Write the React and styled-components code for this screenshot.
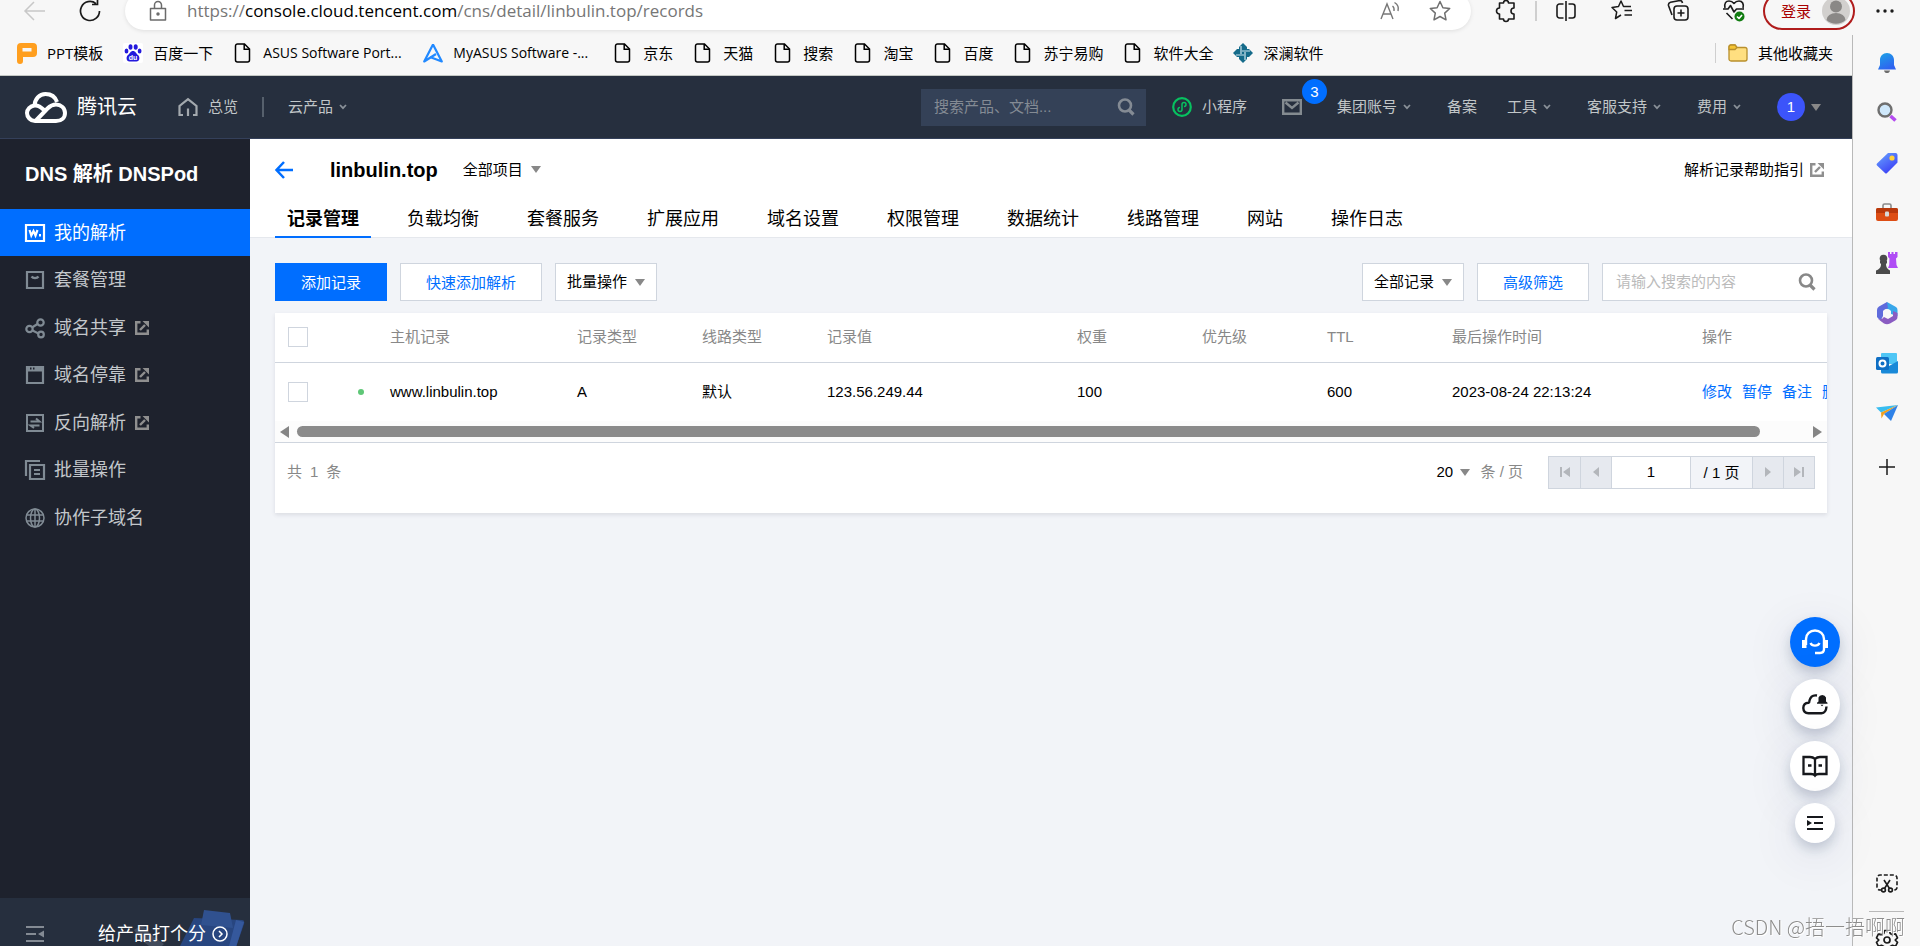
import React from "react";
import styled, { createGlobalStyle, css } from "styled-components";

const sans = '"Liberation Sans", "Noto Sans CJK SC", sans-serif';
const chromeFont = '"Open Sans", "Noto Sans CJK SC", sans-serif';

const GlobalStyle = createGlobalStyle`
  *, *::before, *::after { box-sizing: border-box; }
  html, body { margin: 0; padding: 0; overflow: hidden; }
  body { font: 15px/20px ${sans}; color: #000; background: #f7f7f7; }
  button, input, select { font: inherit; color: inherit; margin: 0; padding: 0; border: 0; background: none; border-radius: 0; outline: none; }
  button, select { cursor: pointer; }
  select { appearance: none; }
  a { color: inherit; text-decoration: none; }
  ul { list-style: none; margin: 0; padding: 0; }
  h1, h2 { margin: 0; font-size: 20px; line-height: 24px; font-weight: 700; }
  svg { display: block; flex: none; overflow: visible; }
`;

/* ---------- browser frame ---------- */

const Shell = styled.div`
  display: flex;
  flex-direction: column;
  height: 100vh;
  overflow: hidden;
`;

const TopBar = styled.header`
  display: flex;
  align-items: center;
  height: 22px;
  margin-bottom: 13px;
  padding: 0 24px;
  flex: none;
  font-family: ${chromeFont};
`;

const IconButton = styled.button`
  display: flex;
  align-items: center;
  justify-content: center;
  width: 22px;
  height: 22px;
  flex: none;
`;

const NavButtons = styled.div`
  display: flex;
  gap: 33px;
  width: 101px;
  flex: none;
`;

const AddressBar = styled.div`
  display: flex;
  align-items: center;
  flex: 1;
  height: 38px;
  padding: 0 20px 0 22px;
  border-radius: 19px;
  background: #fff;
  box-shadow: 0 1px 4px rgba(0, 0, 0, 0.1);
  gap: 18px;
`;

const Url = styled.div`
  flex: 1;
  font-size: 17px;
  line-height: 24px;
  color: #767676;
  white-space: nowrap;
  b { font-weight: 400; color: #000; }
`;

const AddressTools = styled.div`
  display: flex;
  gap: 28px;
`;

const BrowserTools = styled.div`
  display: flex;
  align-items: center;
  gap: 34px;
  margin-left: 24px;
`;

const ToolPair = styled.div`
  display: flex;
  align-items: center;
  gap: 18px;
`;

const Divider = styled.span`
  width: ${(p) => p.$w || 1}px;
  height: 20px;
  background: ${(p) => p.$color || "#cfcfcf"};
  flex: none;
`;

const LoginButton = styled.button`
  display: flex;
  align-items: center;
  justify-content: space-between;
  width: 92px;
  height: 38px;
  margin: 0 19px 0 18px;
  padding: 0 3px 0 16px;
  border: 2px solid #b01c1c;
  border-radius: 19px;
  color: #a80000;
  font-size: 15px;
`;

const Below = styled.div`
  display: flex;
  flex: 1;
  min-height: 0;
`;

const Page = styled.div`
  display: flex;
  flex-direction: column;
  flex: 1;
  min-width: 0;
  position: relative;
`;

const Bookmarks = styled.nav`
  display: flex;
  align-items: center;
  height: 41px;
  padding: 0 19px 4px 17px;
  border-bottom: 1px solid #c4c8c4;
  flex: none;
  gap: 20px;
  font-family: ${chromeFont};
`;

const Bookmark = styled.a`
  display: flex;
  align-items: center;
  gap: 10px;
  white-space: nowrap;
  min-width: ${(p) => (p.$latin ? 170 : 0)}px;
  font-size: ${(p) => (p.$latin ? 14 : 15)}px;
`;

const OtherBookmarks = styled.div`
  display: flex;
  align-items: center;
  gap: 12px;
  margin-left: auto;
`;

const EdgeSidebar = styled.aside`
  display: flex;
  flex-direction: column;
  align-items: center;
  width: 68px;
  padding-top: 3px;
  border-left: 1px solid #b9b9b9;
  flex: none;
`;

const EdgeItem = styled.button`
  display: flex;
  align-items: center;
  justify-content: center;
  width: 50px;
  height: 50px;
  flex: none;
`;

const EdgeAdd = styled(EdgeItem)`
  height: 58px;
`;

const EdgeBottom = styled.div`
  display: flex;
  flex-direction: column;
  align-items: center;
  margin-top: auto;
  margin-bottom: -19px;
  hr { width: 35px; height: 1px; border: 0; margin: 3px 0; background: #b9b9b9; }
`;

/* ---------- console header ---------- */

const Header = styled.header`
  display: flex;
  align-items: center;
  height: 63px;
  padding: 0 31px 0 24px;
  background: #262f3e;
  border-bottom: 1px solid #34405a;
  color: #c1c6c8;
  flex: none;
  white-space: nowrap;
`;

const Logo = styled.a`
  display: flex;
  align-items: center;
  gap: 10px;
  margin-right: 41px;
  color: #fff;
  font-size: 20px;
  line-height: 24px;
`;

const HeaderLink = styled.a`
  display: flex;
  align-items: center;
  gap: ${(p) => p.$gap || 6}px;
  padding-right: ${(p) => p.$end || 0}px;
`;

const LeftNav = styled.nav`
  display: flex;
  align-items: center;
  gap: 24px;
`;

const HeaderSearch = styled.label`
  display: flex;
  align-items: center;
  justify-content: space-between;
  width: 225px;
  height: 37px;
  margin-left: auto;
  margin-right: 26px;
  padding: 0 11px 0 13px;
  background: #344157;
  color: #848b94;
  input { width: 160px; color: #fff; }
  input::placeholder { color: #848b94; opacity: 1; }
`;

const RightNav = styled.nav`
  display: flex;
  align-items: center;
  gap: 30px;
`;

const MailLink = styled.a`
  position: relative;
  padding-right: 5px;
`;

const Badge = styled.span`
  position: absolute;
  left: 20px;
  bottom: 11px;
  width: 25px;
  height: 25px;
  border-radius: 50%;
  background: #006eff;
  color: #fff;
  line-height: 25px;
  text-align: center;
`;

const Account = styled.button`
  display: flex;
  align-items: center;
  gap: 6px;
`;

const Avatar = styled.span`
  width: 28px;
  height: 28px;
  border-radius: 50%;
  background: #3c54fa;
  color: #fff;
  line-height: 28px;
  text-align: center;
`;

const Caret = styled.span`
  width: 0;
  height: 0;
  border: 5px solid transparent;
  border-top: 7px solid #888;
  border-bottom: 0;
  flex: none;
`;

/* ---------- console body ---------- */

const Console = styled.div`
  display: flex;
  flex: 1;
  min-height: 0;
`;

const SideNav = styled.aside`
  display: flex;
  flex-direction: column;
  width: 250px;
  background: #1e222d;
  color: #c3c7cb;
  flex: none;
`;

const SideTitle = styled.h2`
  height: 70px;
  padding: 0 25px;
  color: #fff;
  line-height: 70px;
`;

const SideMenu = styled.ul`
  display: flex;
  flex-direction: column;
  justify-content: space-between;
  min-height: 332px;
`;

const SideLink = styled.a`
  display: flex;
  align-items: center;
  height: 47px;
  padding: 0 25px;
  gap: 9px;
  font-size: 18px;
  line-height: 24px;
  color: ${(p) => (p.$active ? "#fff" : "inherit")};
  background: ${(p) => (p.$active ? "#006eff" : "none")};
  > svg:first-child { color: ${(p) => (p.$active ? "#fff" : "#808b94")}; }
`;

const SideFooter = styled.div`
  display: flex;
  align-items: flex-start;
  justify-content: space-between;
  height: 48px;
  margin-top: auto;
  padding: 0 0 0 26px;
  background: #262f3e;
  overflow: hidden;
`;

const CollapseButton = styled.button`
  padding-top: 28px;
  color: #848b94;
`;

const RateLink = styled.a`
  display: flex;
  align-items: center;
  position: relative;
  padding: 24px 22px 0 0;
  color: #fff;
  font-size: 18px;
  line-height: 24px;
`;

const RateArt = styled.svg`
  position: absolute;
  right: 0;
  top: 8px;
`;

const RateText = styled.span`
  position: relative;
  display: flex;
  align-items: center;
  gap: 6px;
`;

const Main = styled.main`
  display: flex;
  flex-direction: column;
  flex: 1;
  min-width: 0;
  background: #f2f4f8;
`;

const PageHead = styled.div`
  background: #fff;
  border-bottom: 1px solid #e5e8ed;
  padding: 0 25px;
`;

const TitleRow = styled.div`
  display: flex;
  align-items: center;
  height: 61px;
  h1 { margin: 0 25px 0 33px; }
`;

const HelpLink = styled.a`
  display: flex;
  align-items: center;
  gap: 6px;
  margin-left: auto;
  padding-right: 3px;
`;

const SelectBox = styled.label`
  display: flex;
  align-items: center;
  justify-content: center;
  gap: 7px;
  background: ${(p) => (p.$boxed ? "#fff" : "none")};
  ${(p) => p.$boxed && css`
    width: 102px;
    height: 38px;
    border: 1px solid #cfd5de;
  `}
`;

const Tabs = styled.div`
  display: flex;
  gap: 24px;
  margin-bottom: -1px;
`;

const Tab = styled.button`
  height: 38px;
  padding: 3px 12px 0;
  border-bottom: 2px solid ${(p) => (p.$active ? "#006eff" : "transparent")};
  font-size: 18px;
  line-height: 33px;
  font-weight: ${(p) => (p.$active ? 700 : 400)};
`;

const Content = styled.div`
  padding: 25px;
`;

const Toolbar = styled.div`
  display: flex;
  gap: 13px;
  margin-bottom: 12px;
`;

const Button = styled.button`
  display: flex;
  align-items: center;
  justify-content: center;
  gap: 8px;
  width: ${(p) => p.$w}px;
  height: 38px;
  padding-top: ${(p) => (p.$dark ? 0 : 2)}px;
  border: 1px solid ${(p) => (p.$primary ? "#006eff" : "#cfd5de")};
  background: ${(p) => (p.$primary ? "#006eff" : "#fff")};
  color: ${(p) => (p.$primary ? "#fff" : p.$dark ? "#000" : "#006eff")};
`;

const Spacer = styled.div`
  flex: 1;
`;

const SearchField = styled.label`
  display: flex;
  align-items: center;
  width: 225px;
  height: 38px;
  padding: 0 10px 0 13px;
  border: 1px solid #cfd5de;
  background: #fff;
  color: #888;
  input { flex: 1; min-width: 0; }
  input::placeholder { color: #bbb; opacity: 1; }
`;

const Card = styled.section`
  background: #fff;
  box-shadow: 0 2px 4px rgba(54, 58, 80, 0.12);
`;

const TableScroll = styled.div`
  overflow: hidden;
`;

const Table = styled.table`
  width: 100%;
  min-width: 1662px;
  table-layout: fixed;
  border-collapse: collapse;
  th, td { padding: 0 13px; text-align: left; white-space: nowrap; font-weight: 400; }
  th { height: 49px; color: #888; border-bottom: 1px solid #cfd5de; }
  td { height: 59px; color: #000; }
`;

const Check = styled.input`
  appearance: none;
  display: block;
  width: 20px;
  height: 20px;
  border: 1px solid #cfd5de !important;
  background: #fff;
`;

const StatusDot = styled.span`
  display: block;
  width: 6px;
  height: 6px;
  margin-left: 12px;
  border-radius: 50%;
  background: #5fc777;
`;

const Actions = styled.div`
  display: flex;
  gap: 10px;
  color: #006eff;
`;

const ScrollTrack = styled.div`
  display: flex;
  align-items: center;
  justify-content: space-between;
  height: 22px;
  padding: 0 5px;
  background: #fcfcfc;
  border-bottom: 1px solid #cfd5de;
`;

const ScrollLane = styled.div`
  flex: 1;
  padding: 0 7px;
  div { width: 97%; height: 11px; border-radius: 6px; background: #8b8b8b; }
`;

const TableFoot = styled.div`
  display: flex;
  align-items: center;
  height: 70px;
  padding: 0 12px 12px 12px;
  color: #888;
`;

const Total = styled.span`
  display: flex;
  gap: 8px;
  margin-right: auto;
`;

const PerPage = styled.div`
  display: flex;
  align-items: center;
  gap: 10px;
  margin-right: 25px;
  select { color: #000; }
`;

const Pager = styled.div`
  display: flex;
  height: 33px;
  border: 1px solid #cfd5de;
  color: #000;
  > * + * { border-left: 1px solid #cfd5de; }
  input { width: 79px; text-align: center; }
  span { width: 62px; line-height: 31px; text-align: center; background: #f2f4f8; }
`;

const PagerButton = styled.button`
  display: flex;
  align-items: center;
  justify-content: center;
  width: 31px;
  background: #e6e9ef;
  color: #b3b6bb;
`;

/* ---------- floating helpers ---------- */

const FloatStack = styled.div`
  position: absolute;
  right: 12px;
  bottom: 103px;
  display: flex;
  flex-direction: column;
  align-items: center;
  gap: 12px;
`;

const FloatButton = styled.button`
  display: flex;
  align-items: center;
  justify-content: center;
  width: ${(p) => (p.$small ? 40 : 50)}px;
  height: ${(p) => (p.$small ? 40 : 50)}px;
  border-radius: 50%;
  background: ${(p) => (p.$primary ? "#006eff" : "#fff")};
  color: ${(p) => (p.$primary ? "#fff" : "#16181c")};
  box-shadow: 0 6px 12px rgba(25, 45, 90, 0.2), 0 12px 50px rgba(25, 45, 90, 0.12);
`;

const Watermark = styled.div`
  position: fixed;
  right: 15px;
  bottom: 6px;
  font: 20px/26px "Noto Sans CJK SC", sans-serif;
  font-weight: 300;
  color: #8d8d8d;
  text-shadow: 0 0 1px #fff, 1px 1px 0 #fff;
  white-space: nowrap;
`;

/* ---------- icons ---------- */

const Svg = ({ s = 20, w, h, box, sw = 1.5, children, ...rest }) => (
  <svg width={w || s} height={h || s} viewBox={box || `0 0 ${w || s} ${h || s}`} fill="none" stroke="currentColor" strokeWidth={sw} aria-hidden="true" {...rest}>
    {children}
  </svg>
);

const Chevron = () => (
  <Svg w={8} h={6} sw={1.7} color="#8a9199"><path d="M1 1l3 3.2L7 1" /></Svg>
);

const Magnifier = () => (
  <Svg s={18} sw={2.6}><circle cx="8" cy="7.5" r="6" /><path d="M12 12l4.5 4.5" strokeWidth="3.2" /></Svg>
);

const External = () => (
  <Svg s={14} sw={2.4} color="#8f8f8f"><path d="M5.500 1.200H1.200v11.600h11.600V8.500" /><path d="M5 9l5-5" /><path d="M7.500 0H14v6.500z" fill="currentColor" stroke="none" /></Svg>
);

const DocIcon = () => (
  <Svg s={20} sw={1.5}><path d="M4.500 1h7l5 5v11a2 2 0 0 1-2 2h-10a2 2 0 0 1-2-2V3a2 2 0 0 1 2-2z" /><path d="M11.200 1v5.300h5.300" /></Svg>
);

const PptIcon = () => (
  <Svg s={20} stroke="none"><path d="M4 0h12a4 4 0 0 1 4 4v6a4 4 0 0 1-4 4H6v4a2.500 2.500 0 0 1-6 0V4a4 4 0 0 1 4-4z" fill="#ff9f1f" /><path d="M5.500 5h9v3.500h-9z" fill="#f7f7f7" /></Svg>
);

const BaiduIcon = () => (
  <Svg s={20} stroke="none">
    <rect width="20" height="20" rx="2" fill="#fff" />
    <g fill="#2319dc"><ellipse cx="7.500" cy="4" rx="2" ry="2.800" /><ellipse cx="12.700" cy="4" rx="2" ry="2.800" /><ellipse cx="3.500" cy="8" rx="1.900" ry="2.500" /><ellipse cx="16.600" cy="8" rx="1.900" ry="2.500" /><path d="M10 8c2.500 0 3 2.500 5 4 2.200 1.800 1.800 6.500-1.500 6.500H6.500C3.200 18.500 2.800 13.800 5 12c2-1.500 2.500-4 5-4z" /></g>
    <text x="10" y="17" fontSize="7" fontWeight="700" textAnchor="middle" fill="#fff" fontFamily="Liberation Sans">du</text>
  </Svg>
);

const AsusIcon = () => (
  <Svg s={20} sw={2.200} color="#2189ff" strokeLinejoin="round"><path d="M10 1.500L1.200 18.500 13 11M10 1.500l8.800 17L7 14" /></Svg>
);

const KnotIcon = () => (
  <Svg s={20} stroke="none"><path d="M10 0l4 4v2h2l4 4-4 4h-2v2l-4 4-4-4v-2H4l-4-4 4-4h2V4z" fill="#156b8a" /><path d="M8 3v8M12 9v8M3 12h8M9 8h8" stroke="#cfe6ee" strokeWidth="1.200" /></Svg>
);

const FolderIcon = () => (
  <Svg s={20} sw={1.300}><path d="M1 4a2 2 0 0 1 2-2h4l2 2.500h8a2 2 0 0 1 2 2V16a2 2 0 0 1-2 2H3a2 2 0 0 1-2-2z" fill="#ffdf80" stroke="#b9902c" /><path d="M1 6.500h6l2-2L7 2H3a2 2 0 0 0-2 2z" fill="#f5c431" stroke="#b9902c" /></Svg>
);

const CloudLogo = () => (
  <Svg w={43} h={31} sw={4} color="#fff" strokeLinejoin="round">
    <path d="M10.500 14.500C10.500 7 15.500 2 21.500 2c6 0 10 3.500 11.500 8" />
    <path d="M20 18c-3-3-6-5-9.500-4.500C6 14 3 17.500 3 21c0 4 3.500 8 8 8h21c5.500 0 9-3.500 9-8 0-5-4-8.500-9-8.500-4 0-6 1.500-8.500 4L12 28.500" />
  </Svg>
);

const HomeIcon = () => (
  <Svg w={20} h={18} sw={2.200} color="#a3a9ae"><path d="M5 17H1.500V8L10 1.200 18.500 8v9H15M10 10.500V18" /></Svg>
);

const MiniIcon = () => (
  <Svg s={20} sw={2.200} color="#07c160"><circle cx="10" cy="10" r="8.800" /><path d="M8 10.500a2 2 0 1 0 2 2v-5a2 2 0 1 1 2 2" strokeWidth="1.500" /></Svg>
);

const MailIcon = () => (
  <Svg w={20} h={16} sw={2.400} color="#848b90"><path d="M1.200 1.200h17.600v13.600H1.200zM3.500 3.500L10 9l6.500-5.500" /></Svg>
);

const menuIcons = {
  w: <Svg s={20} sw={2.200}><path d="M1 2h18v16H1z" /><path d="M4.500 7l1.800 5.500L8.500 8l2 4.500L12.500 7" /><path d="M14 11h2v2.500h-2z" fill="currentColor" stroke="none" /></Svg>,
  bag: <Svg s={20} sw={2.200}><path d="M2 2h16v16H2zM6.500 6.500a4 3 0 0 0 7 0" /></Svg>,
  share: <Svg s={20} sw={2.200}><circle cx="4.500" cy="11" r="3.200" /><circle cx="15.500" cy="4.500" r="3.200" /><circle cx="16" cy="16.500" r="2.800" /><path d="M7 9.500l5.500-3.500M7.500 12.500l6 3" /></Svg>,
  win: <Svg s={20} sw={2.200}><path d="M2 2h16v16H2z" /><path d="M2 2h16v4.500H2z" fill="currentColor" stroke="none" /><path d="M5 3.500h1.500M8 3.500h1.500" stroke="#1e222d" /></Svg>,
  swap: <Svg s={20} sw={2}><path d="M2 2h16v16H2zM5.500 8.500h9L11 5.500M14.500 12.500h-9l3.500 2.500" /></Svg>,
  copy: <Svg s={20} sw={2.200}><path d="M1 16V1h14M5 5h14v14H5zM9 10h6M9 14h6" /></Svg>,
  globe: <Svg s={20} sw={1.500}><circle cx="10" cy="10" r="9" /><ellipse cx="10" cy="10" rx="4.500" ry="9" /><path d="M10 1v18M1.500 7h17M1.500 13h17" /></Svg>,
};

const edgeIcons = [
  ["通知", <Svg s={20} stroke="none"><defs><linearGradient id="bell" x1="0" y1="0" x2="0.500" y2="1"><stop offset="0" stopColor="#1ba5e6" /><stop offset="1" stopColor="#2f63f0" /></linearGradient></defs><path d="M10 0c4 0 7 3 7 7v5l2 4.500H1L3 12V7c0-4 3-7 7-7z" fill="url(#bell)" /><path d="M7 17.500h6c-.5 2-1.500 2.500-3 2.500s-2.500-.5-3-2.500z" fill="#6d6d6d" /></Svg>],
  ["搜索", <Svg s={20}><circle cx="8" cy="7" r="6.500" fill="#cfe8fb" stroke="#6f6f6f" strokeWidth="2.400" /><path d="M13.500 13l5 4.500" stroke="#b44bf0" strokeWidth="3.600" /></Svg>],
  ["购物", <Svg s={22} stroke="none"><defs><linearGradient id="tag" x1="0" y1="0" x2="0.700" y2="1"><stop offset="0" stopColor="#6aa8ff" /><stop offset="1" stopColor="#3a3cf5" /></linearGradient></defs><path d="M12 1h7.500a2 2 0 0 1 2 2v7.500L11 21q-1 1-2 0L1 13.500q-1-1 0-2z" fill="url(#tag)" /><circle cx="16" cy="6" r="2.600" fill="#ffd23c" /></Svg>],
  ["工具", <Svg s={22} stroke="none"><path d="M7 6V3.500A1.500 1.500 0 0 1 8.500 2h5A1.500 1.500 0 0 1 15 3.500V6" fill="none" stroke="#8a8a8a" strokeWidth="1.600" /><rect x="0" y="6" width="22" height="13" rx="2" fill="#dd4d14" /><path d="M0 8a2 2 0 0 1 2-2h18a2 2 0 0 1 2 2v3H0z" fill="#b8380b" /><rect x="9" y="9.500" width="4" height="5" rx="1" fill="#d9d9d9" /></Svg>],
  ["游戏", <Svg s={22} stroke="none"><path d="M12 0h2v2h1.500V0h2v2H19V0h2.500v5L20 6.500l.5 6.500 1.500 3H12l1.200-3 .3-6.500L12 5z" fill="#b04cf5" /><g fill="#4b4b4b"><circle cx="7.500" cy="6.500" r="3.800" /><path d="M4 9h7v2l-1 1c0 3 1 5 4 6.500V22H0v-3.500C4 17 5 15 5 12l-1-1z" /></g></Svg>],
  ["Microsoft 365", <Svg s={22} stroke="none"><path d="M11 0L20 5q1.500 1 1.500 3v6L15 12V9l-6-3z" fill="#39a7ea" /><path d="M11 0L3 4.500Q1 5.500 1 8v7q1 2 4 3l2-4V9l5-3z" fill="#5f6bdc" /><path d="M21.500 11v4q0 2-1.500 3l-6 3.500q-3 1.500-6 0L2 17q4 1 6-2l4 2 5-3V9z" fill="#8a5cc2" /><circle cx="11" cy="11" r="4" fill="#f7f7f7" /></Svg>],
  ["Outlook", <Svg s={22} stroke="none"><path d="M6 1h14a1 1 0 0 1 1 1v10H5V2a1 1 0 0 1 1-1z" fill="#4fc6f5" /><path d="M5 10l8 4 9-5v11a1.500 1.500 0 0 1-1.500 1.500h-14A1.500 1.500 0 0 1 5 20z" fill="#1989d8" /><rect x="0" y="5" width="13" height="13" rx="1.500" fill="#0f6fc4" /><circle cx="6.500" cy="11.500" r="3" fill="none" stroke="#fff" strokeWidth="2" /></Svg>],
  ["Drop", <Svg s={22} stroke="none"><path d="M0 5.500L22 3 5 10.500z" fill="#38bdf0" /><path d="M5 10.500L22 3 8 12l-2.500 4.500z" fill="#f0a01e" /><path d="M8 12L22 3l-7 16z" fill="#2e82e8" /></Svg>],
];

const PersonIcon = () => (
  <Svg s={28} stroke="none"><circle cx="14" cy="14" r="14" fill="#d2d0ce" /><circle cx="14" cy="9.500" r="6" fill="#8a8886" /><path d="M4.500 23a9.500 7 0 0 1 19 0 14 14 0 0 1-19 0z" fill="#8a8886" /></Svg>
);

/* ---------- data ---------- */

const bookmarks = [
  { label: "PPT模板", icon: <PptIcon /> },
  { label: "百度一下", icon: <BaiduIcon /> },
  { label: "ASUS Software Port...", latin: true },
  { label: "MyASUS Software -...", latin: true, icon: <AsusIcon /> },
  { label: "京东" },
  { label: "天猫" },
  { label: "搜索" },
  { label: "淘宝" },
  { label: "百度" },
  { label: "苏宁易购" },
  { label: "软件大全" },
  { label: "深澜软件", icon: <KnotIcon /> },
];

const menu = [
  { label: "我的解析", icon: "w", active: true },
  { label: "套餐管理", icon: "bag" },
  { label: "域名共享", icon: "share", external: true },
  { label: "域名停靠", icon: "win", external: true },
  { label: "反向解析", icon: "swap", external: true },
  { label: "批量操作", icon: "copy" },
  { label: "协作子域名", icon: "globe" },
];

const tabs = ["记录管理", "负载均衡", "套餐服务", "扩展应用", "域名设置", "权限管理", "数据统计", "线路管理", "网站", "操作日志"];

const columns = [
  ["主机记录", 187],
  ["记录类型", 125],
  ["线路类型", 125],
  ["记录值", 250],
  ["权重", 125],
  ["优先级", 125],
  ["TTL", 125],
  ["最后操作时间", 250],
  ["操作", null],
];

const records = [
  ["www.linbulin.top", "A", "默认", "123.56.249.44", "100", "", "600", "2023-08-24 22:13:24"],
];

/* ---------- sections ---------- */

const BrowserTop = () => (
  <TopBar>
    <NavButtons>
      <IconButton aria-label="后退"><Svg s={22} color="#c8c8c8"><path d="M1 11h20M10 2l-9 9 9 9" /></Svg></IconButton>
      <IconButton aria-label="刷新"><Svg s={22} color="#1b1b1b" sw={1.700}><path d="M20.500 11A9.500 9.500 0 1 1 17 3.600M13 4.500h5.500V-1" /></Svg></IconButton>
    </NavButtons>
    <AddressBar>
      <Svg w={22} h={20} color="#6b6b6b"><path d="M3.500 7.500h15v11.500h-15zM7.500 7.500V4a3.500 3.500 0 0 1 7 0v3.500" strokeLinejoin="round" /><circle cx="11" cy="13" r="1" fill="currentColor" /></Svg>
      <Url>https://<b>console.cloud.tencent.com</b>/cns/detail/linbulin.top/records</Url>
      <AddressTools>
        <IconButton aria-label="朗读"><Svg s={20} color="#777" sw={1.400}><path d="M1 18L7 3l6 15M3 13h8M12.500 5q2 1.500 1.500 5M14.500 1.500q5 3 3.500 8.500" /></Svg></IconButton>
        <IconButton aria-label="收藏"><Svg s={22} color="#6f6f6f" strokeLinejoin="round"><path d="M11 1.500l2.900 6.200 6.800.8-5 4.600 1.300 6.700-6-3.300-6 3.300 1.300-6.700-5-4.600 6.800-.8z" /></Svg></IconButton>
      </AddressTools>
    </AddressBar>
    <BrowserTools>
      <ToolPair>
        <IconButton aria-label="扩展"><Svg s={22} color="#1b1b1b" sw={1.600} strokeLinejoin="round"><path d="M4.500 3h4a2.500 2.500 0 0 1 5 0H19v5a3 3 0 0 0 0 6v5h-5.500a2.500 2.500 0 0 1-5 0h-4v-5a3 3 0 0 1 0-6z" /></Svg></IconButton>
        <Divider $w={2} />
        <IconButton aria-label="分屏"><Svg s={20} color="#1b1b1b" sw={1.600}><path d="M7.500 3h-4a2.500 2.500 0 0 0-2.500 2.500v9A2.500 2.500 0 0 0 3.500 17h4M12.500 3h4A2.500 2.500 0 0 1 19 5.500v9a2.500 2.500 0 0 1-2.500 2.500h-4M10 0v20" /></Svg></IconButton>
      </ToolPair>
      <IconButton aria-label="收藏夹"><Svg s={22} color="#1b1b1b" strokeLinejoin="round"><path d="M10 15l-5.500 3.500 1.200-6.500L1 7.500l6.500-1L10 1l2.500 5.500H20M13.500 10.500H21M13.500 15H21" /></Svg></IconButton>
      <IconButton aria-label="集锦"><Svg s={22} color="#1b1b1b" sw={1.600}><rect x="7" y="6" width="14" height="14" rx="3" /><path d="M14 9.500v7M10.500 13h7M5 15L1.500 5.500q-.5-2.500 2-3.200L13 .5q2 0 2.500 2.500" /></Svg></IconButton>
      <IconButton aria-label="性能"><Svg s={22} color="#1b1b1b" sw={1.600} strokeLinejoin="round"><path d="M2 8C1 3 3 1 6 1q3 0 5 2.500Q13 1 16 1c3.500 0 5 3 4 7M0 9h5l2.500-3.500L11 12l2.500-3H21M3.500 13l6 6" /><circle cx="16.500" cy="16.500" r="5" fill="#107c10" stroke="none" /><path d="M14 16.500l2 2 3-3.500" stroke="#fff" /></Svg></IconButton>
    </BrowserTools>
    <LoginButton>登录<PersonIcon /></LoginButton>
    <IconButton aria-label="更多"><Svg w={18} h={4} stroke="none"><g fill="#1b1b1b"><circle cx="2" cy="2" r="1.700" /><circle cx="9" cy="2" r="1.700" /><circle cx="16" cy="2" r="1.700" /></g></Svg></IconButton>
  </TopBar>
);

const BookmarkBar = () => (
  <Bookmarks>
    {bookmarks.map((b) => (
      <Bookmark href="#" key={b.label} $latin={b.latin}>{b.icon || <DocIcon />}{b.label}</Bookmark>
    ))}
    <OtherBookmarks>
      <Divider />
      <Bookmark href="#"><FolderIcon />其他收藏夹</Bookmark>
    </OtherBookmarks>
  </Bookmarks>
);

const ConsoleHeader = () => (
  <Header>
    <Logo href="#"><CloudLogo />腾讯云</Logo>
    <LeftNav>
      <HeaderLink href="#" $gap={10}><HomeIcon />总览</HeaderLink>
      <Divider $color="#56606c" $w={2} />
      <HeaderLink href="#">云产品<Chevron /></HeaderLink>
    </LeftNav>
    <HeaderSearch>
      <input placeholder="搜索产品、文档..." aria-label="搜索产品、文档" />
      <Magnifier />
    </HeaderSearch>
    <RightNav>
      <HeaderLink href="#" $gap={10} $end={5}><MiniIcon />小程序</HeaderLink>
      <MailLink href="#" aria-label="消息"><MailIcon /><Badge>3</Badge></MailLink>
      <HeaderLink href="#" $end={6}>集团账号<Chevron /></HeaderLink>
      <HeaderLink href="#">备案</HeaderLink>
      <HeaderLink href="#" $end={6}>工具<Chevron /></HeaderLink>
      <HeaderLink href="#" $end={6}>客服支持<Chevron /></HeaderLink>
      <HeaderLink href="#" $end={6}>费用<Chevron /></HeaderLink>
      <Account aria-label="账号"><Avatar>1</Avatar><Caret /></Account>
    </RightNav>
  </Header>
);

const Side = () => (
  <SideNav>
    <SideTitle>DNS 解析 DNSPod</SideTitle>
    <SideMenu>
      {menu.map((m) => (
        <li key={m.label}>
          <SideLink href="#" $active={m.active}>{menuIcons[m.icon]}{m.label}{m.external && <External />}</SideLink>
        </li>
      ))}
    </SideMenu>
    <SideFooter>
      <CollapseButton aria-label="收起菜单"><Svg w={18} h={16} sw={2.200}><path d="M0 1h18M0 8h10M0 15h18" /><path d="M18 4.500v7L12 8z" fill="currentColor" stroke="none" /></Svg></CollapseButton>
      <RateLink href="#">
        <RateArt width="116" height="44" viewBox="0 0 116 44" aria-hidden="true">
          <path d="M0 24q10-8 16 4l14 10-6 6q-14-4-24-20z" fill="#424b5b" />
          <path d="M60 12l48 2q3 0 2 4l-9 26H44z" fill="#284680" />
          <path d="M70 4l26 3 3 15-32-3z" fill="#30518f" />
          <path d="M102 14l8 2-9 28h-7z" fill="#35589c" />
        </RateArt>
        <RateText>给产品打个分<Svg s={16} sw={1.500}><circle cx="8" cy="8" r="7" /><path d="M7 5l3 3-3 3" /></Svg></RateText>
      </RateLink>
    </SideFooter>
  </SideNav>
);

const RecordTable = () => (
  <Card>
    <TableScroll>
      <Table>
        <colgroup>
          <col width="58" />
          <col width="44" />
          {columns.map(([name, w]) => <col key={name} width={w || undefined} />)}
        </colgroup>
        <thead>
          <tr>
            <th><Check type="checkbox" aria-label="全选" /></th>
            <th aria-label="状态" />
            {columns.map(([name]) => <th key={name} scope="col">{name}</th>)}
          </tr>
        </thead>
        <tbody>
          {records.map((r) => (
            <tr key={r[0]}>
              <td><Check type="checkbox" aria-label={r[0]} /></td>
              <td><StatusDot /></td>
              {r.map((v, i) => <td key={i}>{v}</td>)}
              <td><Actions><a href="#">修改</a><a href="#">暂停</a><a href="#">备注</a><a href="#">删除</a></Actions></td>
            </tr>
          ))}
        </tbody>
      </Table>
    </TableScroll>
    <ScrollTrack>
      <Svg w={10} h={12} stroke="none"><path d="M0 6l9-6v12z" fill="#858585" /></Svg>
      <ScrollLane><div /></ScrollLane>
      <Svg w={10} h={12} stroke="none"><path d="M10 6L1 0v12z" fill="#858585" /></Svg>
    </ScrollTrack>
    <TableFoot>
      <Total><span>共</span><span>1</span><span>条</span></Total>
      <PerPage>
        <SelectBox><select aria-label="每页条数"><option>20</option></select><Caret /></SelectBox>
        条 / 页
      </PerPage>
      <Pager>
        <PagerButton aria-label="第一页"><Svg w={10} h={12} stroke="none"><path d="M0 1h2v10H0zM10 1v10L3 6z" fill="currentColor" /></Svg></PagerButton>
        <PagerButton aria-label="上一页"><Svg w={8} h={12} stroke="none"><path d="M7 1v10L1 6z" fill="currentColor" /></Svg></PagerButton>
        <input aria-label="页码" defaultValue="1" />
        <span>/ 1 页</span>
        <PagerButton aria-label="下一页"><Svg w={8} h={12} stroke="none"><path d="M1 1v10l6-5z" fill="currentColor" /></Svg></PagerButton>
        <PagerButton aria-label="最后一页"><Svg w={10} h={12} stroke="none"><path d="M8 1h2v10H8zM0 1v10l7-5z" fill="currentColor" /></Svg></PagerButton>
      </Pager>
    </TableFoot>
  </Card>
);

const Floats = () => (
  <FloatStack>
    <FloatButton $primary aria-label="在线客服"><Svg s={26} sw={2.400}><path d="M4 16V10a9 8.500 0 0 1 18 0v10q0 4-4 4h-5M8.500 14a4.800 4 0 0 0 9 0" /><path d="M0 11h4.500v8H0zM21.500 11H26v8h-4.500z" fill="currentColor" stroke="none" /></Svg></FloatButton>
    <FloatButton aria-label="公告"><Svg s={26} sw={2.400}><path d="M15 4.500Q9 3.500 7.500 9.500q0 2-1 2.300Q1.500 12 1.300 17q.2 5 5.200 5.300h13Q24 22 24.500 15.500" /><path d="M16.500 10.500V6.500a4 4 0 0 1 7.500 0v4l1.500 1.200v1h-10.500v-1zM18.500 13.800h3l-1.500 1.400z" fill="currentColor" stroke="none" /></Svg></FloatButton>
    <FloatButton aria-label="文档"><Svg s={26} sw={2.300}><path d="M13 6q-2-2-5-2H1.500v17H9q3 0 4 1.500Q14 21 17 21h7.500V4H18q-3 0-5 2zM13 6v17M6 12.500h3.500M16.500 12.500H20" /></Svg></FloatButton>
    <FloatButton $small aria-label="收起"><Svg w={16} h={14} sw={2}><path d="M0 1h16M7 7h9M0 13h16" /><path d="M0 4v6l5-3z" fill="currentColor" stroke="none" /></Svg></FloatButton>
  </FloatStack>
);

export default function App() {
  return (
    <Shell>
      <GlobalStyle />
      <BrowserTop />
      <Below>
        <Page>
          <BookmarkBar />
          <ConsoleHeader />
          <Console>
            <Side />
            <Main>
              <PageHead>
                <TitleRow>
                  <IconButton aria-label="返回"><Svg w={22} h={18} sw={2.500} color="#006eff"><path d="M2 9h16M9 1L1.500 9 9 17" /></Svg></IconButton>
                  <h1>linbulin.top</h1>
                  <SelectBox><select aria-label="项目"><option>全部项目</option></select><Caret /></SelectBox>
                  <HelpLink href="#">解析记录帮助指引<External /></HelpLink>
                </TitleRow>
                <Tabs role="tablist">
                  {tabs.map((t, i) => <Tab key={t} role="tab" aria-selected={i === 0} $active={i === 0}>{t}</Tab>)}
                </Tabs>
              </PageHead>
              <Content>
                <Toolbar>
                  <Button $primary $w={112}>添加记录</Button>
                  <Button $w={142}>快速添加解析</Button>
                  <Button $w={102} $dark>批量操作<Caret /></Button>
                  <Spacer />
                  <SelectBox $boxed><select aria-label="记录筛选"><option>全部记录</option></select><Caret /></SelectBox>
                  <Button $w={112}>高级筛选</Button>
                  <SearchField><input placeholder="请输入搜索的内容" aria-label="搜索记录" /><Magnifier /></SearchField>
                </Toolbar>
                <RecordTable />
              </Content>
            </Main>
          </Console>
          <Floats />
        </Page>
        <EdgeSidebar>
          {edgeIcons.map(([name, icon]) => <EdgeItem key={name} aria-label={name}>{icon}</EdgeItem>)}
          <EdgeAdd aria-label="自定义"><Svg s={16} color="#1b1b1b"><path d="M8 0v16M0 8h16" /></Svg></EdgeAdd>
          <EdgeBottom>
            <EdgeItem aria-label="截图"><Svg w={22} h={20} sw={1.600} color="#1b1b1b"><path d="M6 17H4a3 3 0 0 1-3-3V5a3 3 0 0 1 3-3h14a3 3 0 0 1 3 3v9a3 3 0 0 1-3 3h-2" strokeDasharray="4 2" /><path d="M8 7l5.500 8.500M14 7l-5.500 8.500" /><circle cx="7.500" cy="17" r="1.900" /><circle cx="14.500" cy="17" r="1.900" /></Svg></EdgeItem>
            <hr />
            <EdgeItem aria-label="设置"><Svg s={22} sw={1.700} color="#1b1b1b" strokeLinejoin="round"><path d="M8.500 1.500h5l.7 3 2.300 1.300 3-1 2 4-2.300 2.200 2.300 2.300-2 4-3-1-2.300 1.300-.7 3h-5l-.7-3-2.300-1.300-3 1-2-4L2.800 11 .5 8.800l2-4 3 1 2.300-1.300z" /><circle cx="11" cy="11" r="3" /></Svg></EdgeItem>
          </EdgeBottom>
        </EdgeSidebar>
      </Below>
      <Watermark>CSDN @捂一捂啊啊</Watermark>
    </Shell>
  );
}
